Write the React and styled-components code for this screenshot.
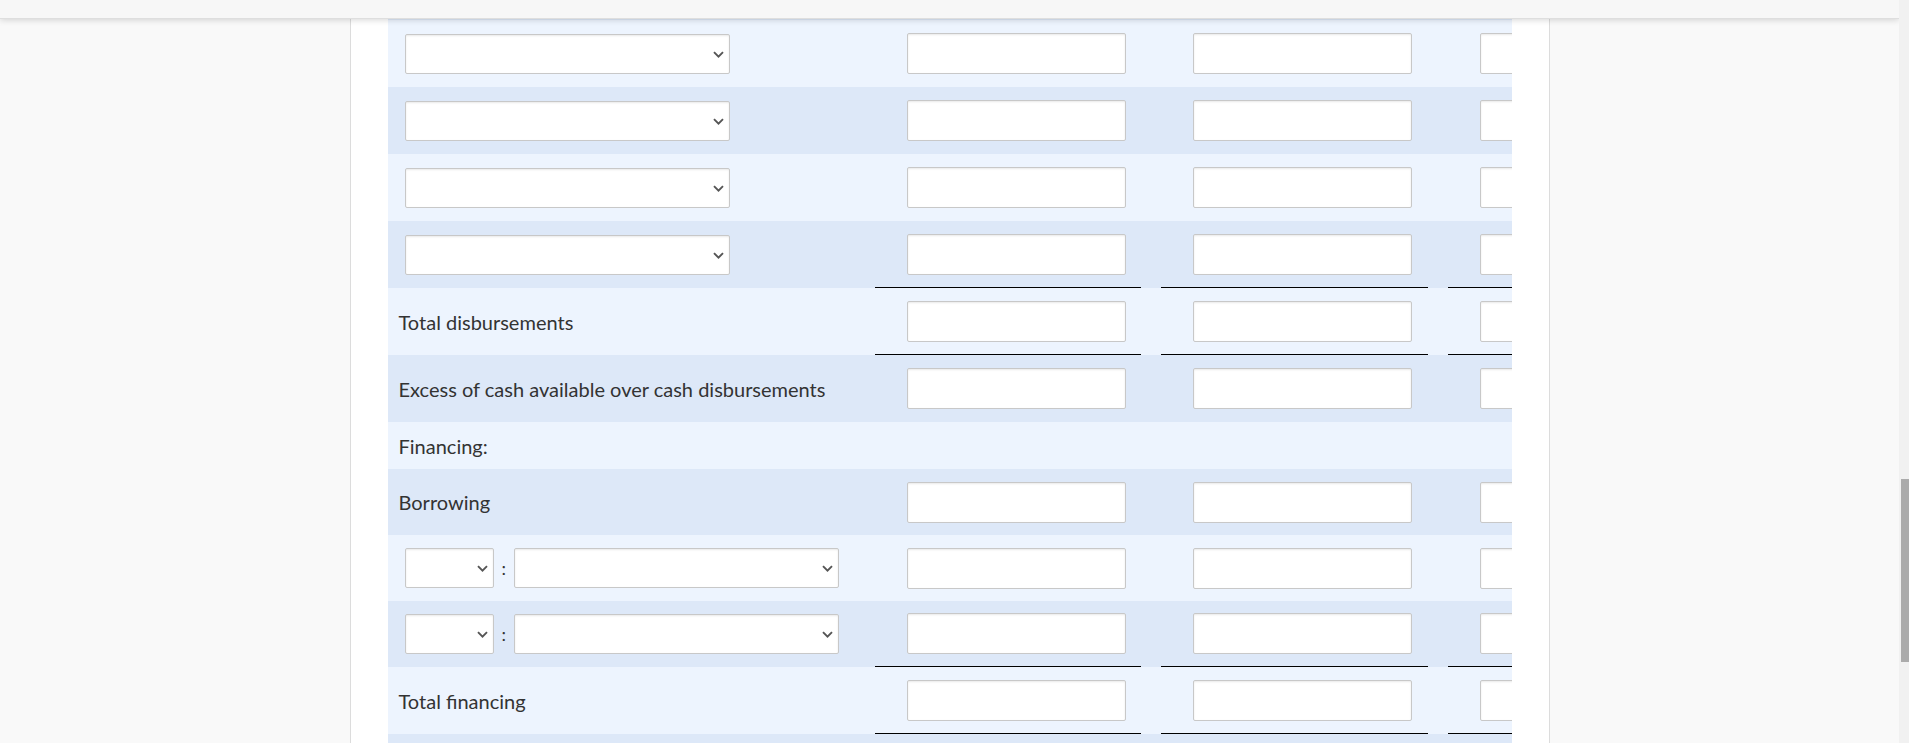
import React, { useLayoutEffect, useRef, useState } from "react";
import styled, { createGlobalStyle } from "styled-components";

const MONTHS = ["April", "May", "June", "Quarter"];

// earlier disbursement rows sit above the visible part, scrolled out of view
const ROWS = [
  ...Array.from({ length: 29 }, () => ({ kind: "pick" })),
  { kind: "pick", anchor: true },
  { kind: "pick" },
  { kind: "pick" },
  { kind: "pick", rule: true },
  { kind: "amount", label: "Total disbursements", rule: true },
  { kind: "amount", label: "Excess of cash available over cash disbursements" },
  { kind: "label", label: "Financing:" },
  { kind: "amount", label: "Borrowing", tight: true },
  { kind: "pair", tight: true },
  { kind: "pair", rule: true, tight: true },
  { kind: "amount", label: "Total financing", rule: true },
  { kind: "pick" },
];

function rowHeight(row) {
  if (row.kind === "label") return 47;
  return row.tight ? 66 : 67;
}

function Chevron() {
  return (
    <ChevronIcon width="11" height="7" viewBox="0 0 11 7" aria-hidden="true">
      <path d="M1 1.1 5.5 5.6 10 1.1" fill="none" stroke="#555" strokeWidth="1.9" />
    </ChevronIcon>
  );
}

function Dropdown({ width }) {
  return (
    <SelectBox $w={width}>
      <NativeSelect defaultValue="">
        <option value=""></option>
      </NativeSelect>
      <Chevron />
    </SelectBox>
  );
}

function Amounts({ rule }) {
  return MONTHS.map((m) => (
    <AmountCell key={m} $rule={rule}>
      <Field type="text" aria-label={m} />
    </AmountCell>
  ));
}

function Row({ row, index, anchorRef }) {
  const alt = index % 2 === 0;
  const ref = row.anchor ? anchorRef : undefined;

  return (
    <RowGrid ref={ref} $alt={alt} $h={rowHeight(row)}>
      {row.kind === "label" && <LabelCell>{row.label}</LabelCell>}
      {row.kind === "amount" && (
        <>
          <LabelCell>{row.label}</LabelCell>
          <Amounts rule={row.rule} />
        </>
      )}
      {row.kind === "pick" && (
        <>
          <LabelCell>
            <PickSlot>
              <Dropdown width={325} />
            </PickSlot>
          </LabelCell>
          <Amounts rule={row.rule} />
        </>
      )}
      {row.kind === "pair" && (
        <>
          <LabelCell>
            <PickSlot>
              <Dropdown width={89} />
              <Colon>:</Colon>
              <Dropdown width={325} />
            </PickSlot>
          </LabelCell>
          <Amounts rule={row.rule} />
        </>
      )}
    </RowGrid>
  );
}

export default function App() {
  const viewRef = useRef(null);
  const railRef = useRef(null);
  const anchorRef = useRef(null);
  const [thumb, setThumb] = useState({ top: 0, height: 0 });

  function measure() {
    const view = viewRef.current;
    const rail = railRef.current;
    if (!view || !rail) return;
    const railH = rail.clientHeight;
    const height = Math.max(20, (railH * view.clientHeight) / view.scrollHeight);
    const range = view.scrollHeight - view.clientHeight;
    const top = range > 0 ? (view.scrollTop / range) * (railH - height) : 0;
    setThumb({ top, height });
  }

  useLayoutEffect(() => {
    const view = viewRef.current;
    const anchor = anchorRef.current;
    if (view && anchor) {
      const top = anchor.getBoundingClientRect().top - view.getBoundingClientRect().top;
      view.scrollTop = view.scrollTop + top - 20;
    }
    measure();
  }, []);

  return (
    <>
      <GlobalStyle />
      <Shell>
        <Viewport ref={viewRef} onScroll={measure}>
          <TopBar />
          <Page>
            <Sheet>
              <TableClip>
                {ROWS.map((row, i) => (
                  <Row key={i} row={row} index={i} anchorRef={anchorRef} />
                ))}
              </TableClip>
            </Sheet>
          </Page>
        </Viewport>
        <Rail ref={railRef}>
          <Thumb style={{ top: thumb.top, height: thumb.height }} />
        </Rail>
      </Shell>
    </>
  );
}

const GlobalStyle = createGlobalStyle`
  html, body {
    margin: 0;
    height: 100%;
    overflow: hidden;
  }
  body {
    font-family: Lato, "Open Sans", "Liberation Sans", sans-serif;
    color: #333;
  }
`;

const Shell = styled.div`
  display: flex;
  height: 100vh;
  background: #f9f9f9;
`;

const Viewport = styled.div`
  flex: 1;
  min-width: 0;
  overflow-y: scroll;
  overflow-x: hidden;
  scrollbar-width: none;

  &::-webkit-scrollbar {
    display: none;
  }
`;

const Rail = styled.div`
  position: relative;
  flex: 0 0 10px;
  background: #f1f1f1;
`;

const Thumb = styled.div`
  position: absolute;
  left: 2px;
  right: 0;
  background: #ababab;
`;

const TopBar = styled.div`
  position: sticky;
  top: 0;
  z-index: 5;
  height: 18px;
  background: #f7f7f7;
  box-shadow: 0 1px 0 #dedede, 0 2px 6px rgba(0, 0, 0, 0.16);
`;

const Page = styled.div`
  padding-bottom: 232px;
`;

const Sheet = styled.div`
  width: 1200px;
  margin: 0 auto;
  box-sizing: border-box;
  padding: 5px 37px 38px;
  background: #fff;
  border-left: 1px solid #dcdcdc;
  border-right: 1px solid #dcdcdc;
`;

const TableClip = styled.div`
  overflow: hidden;
`;

const RowGrid = styled.div`
  display: grid;
  grid-template-columns: 467px repeat(4, 266.5px);
  column-gap: 20px;
  width: max-content;
  height: ${(p) => p.$h}px;
  background: ${(p) => (p.$alt ? "#dde8f8" : "#edf4fe")};
`;

const LabelCell = styled.div`
  display: flex;
  align-items: center;
  padding-left: 11px;
  font-size: 20px;
  color: #333;
  white-space: nowrap;
`;

const PickSlot = styled.div`
  display: flex;
  align-items: center;
  gap: 8px;
  margin-left: 6px;
`;

const Colon = styled.span`
  font-size: 18px;
  color: #333;
`;

const SelectBox = styled.span`
  position: relative;
  display: inline-flex;
  width: ${(p) => p.$w}px;
`;

const NativeSelect = styled.select`
  appearance: none;
  width: 100%;
  height: 40px;
  box-sizing: border-box;
  margin: 0;
  padding: 0 24px 0 8px;
  border: 1px solid #c8c8c8;
  border-radius: 2px;
  background: #fff;
  box-shadow: inset 0 1px 2px rgba(0, 0, 0, 0.09);
  font: inherit;
  font-size: 16px;
  color: #333;
  outline: none;
`;

const ChevronIcon = styled.svg`
  position: absolute;
  right: 6px;
  top: 50%;
  margin-top: -3px;
  pointer-events: none;
`;

const AmountCell = styled.div`
  display: flex;
  align-items: center;
  box-sizing: border-box;
  padding-left: 32px;
  border-bottom: ${(p) => (p.$rule ? "1px solid #000" : "none")};
`;

const Field = styled.input`
  width: 219px;
  height: 41px;
  box-sizing: border-box;
  margin: 0;
  padding: 0 8px;
  border: 1px solid #c8c8c8;
  border-radius: 2px;
  background: #fff;
  box-shadow: inset 0 1px 2px rgba(0, 0, 0, 0.09);
  font: inherit;
  font-size: 16px;
  color: #333;
  outline: none;
`;
